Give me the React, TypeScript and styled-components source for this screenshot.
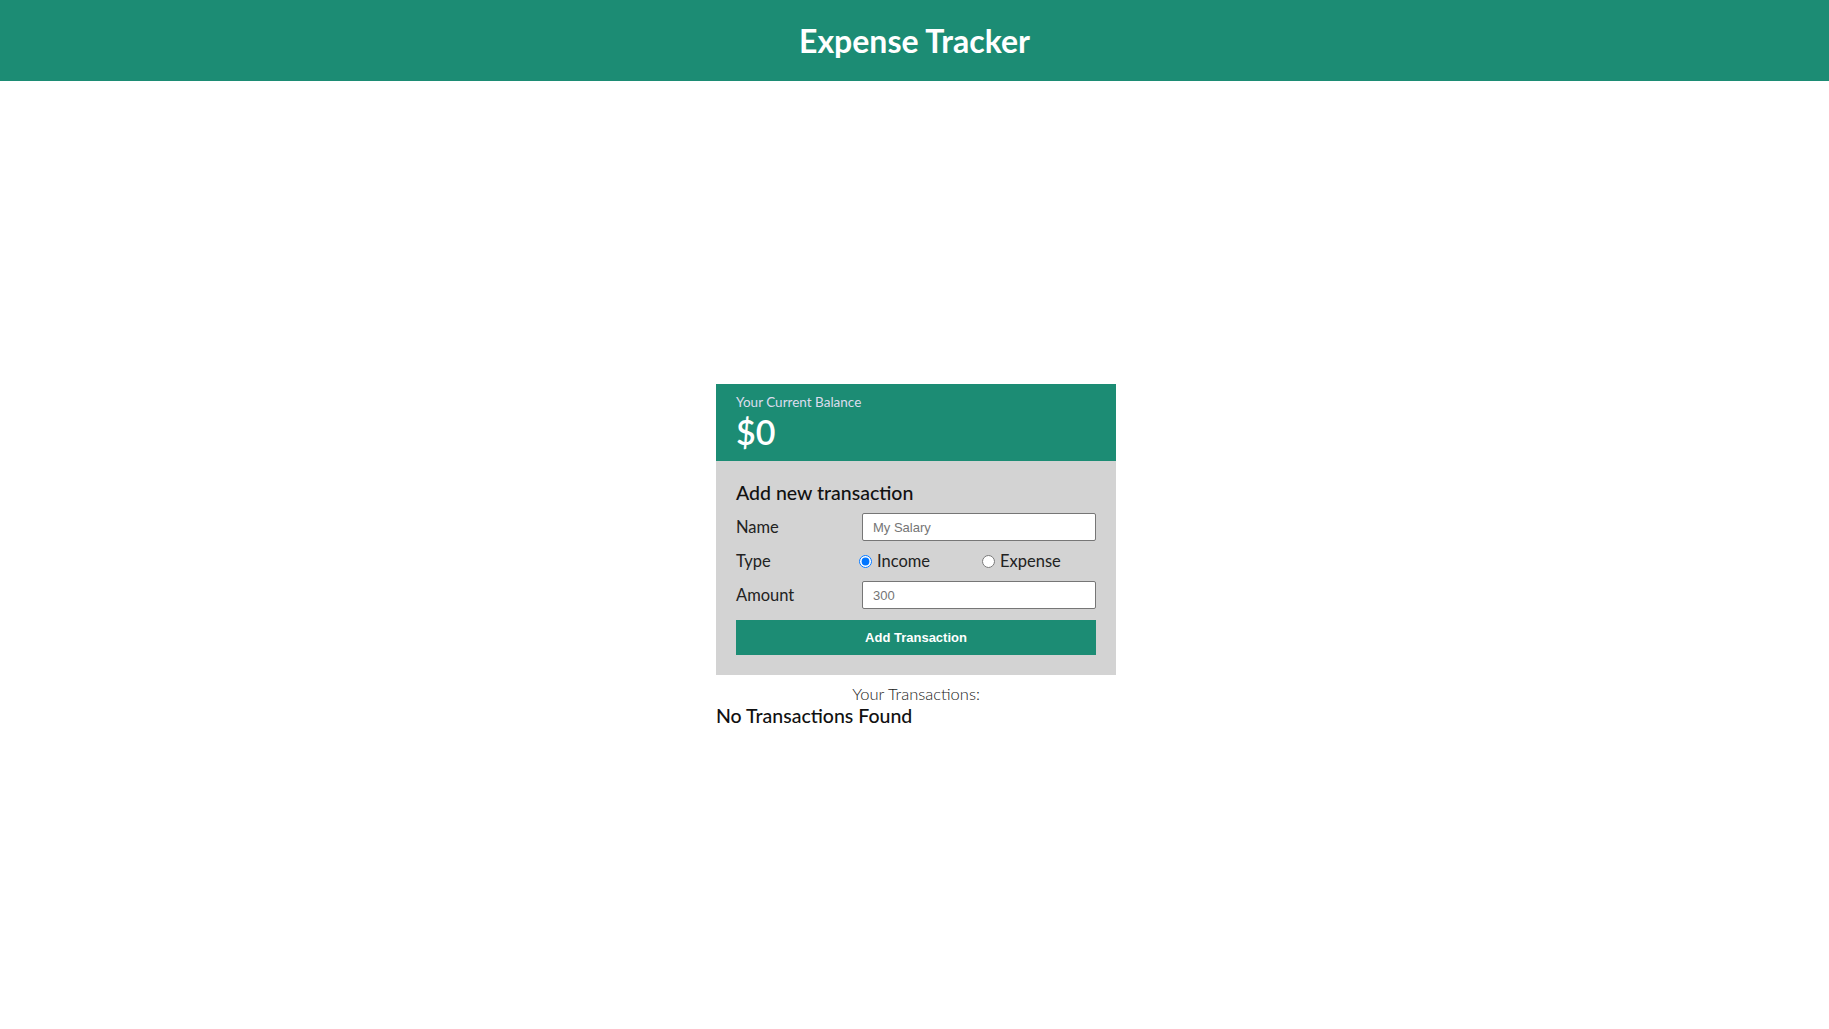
import styled, { createGlobalStyle } from 'styled-components';

const GlobalStyle = createGlobalStyle`
  body {
    margin: 0;
    font-family: "Lato", "Open Sans", sans-serif;
    color: #111;
    background: #fff;
  }
  * {
    box-sizing: border-box;
  }
`;

function App() {
  return (
    <>
      <GlobalStyle />
      <Header>
        <HeaderTitle>Expense Tracker</HeaderTitle>
      </Header>
      <Main>
        <Tracker>
          <BalanceBox>
            <BalanceLabel>Your Current Balance</BalanceLabel>
            <BalanceValue>$0</BalanceValue>
          </BalanceBox>
          <FormBox>
            <FormTitle>Add new transaction</FormTitle>
            <Row>
              <Label>Name</Label>
              <TextInput placeholder="My Salary" />
            </Row>
            <Row>
              <TypeLabel>Type</TypeLabel>
              <RadioOption>
                <input type="radio" name="type" defaultChecked />
                Income
              </RadioOption>
              <RadioOption>
                <input type="radio" name="type" />
                Expense
              </RadioOption>
            </Row>
            <Row>
              <Label>Amount</Label>
              <TextInput placeholder="300" />
            </Row>
            <SubmitButton>Add Transaction</SubmitButton>
          </FormBox>
          <ListTitle>Your Transactions:</ListTitle>
          <EmptyText>No Transactions Found</EmptyText>
        </Tracker>
      </Main>
    </>
  );
}

export default App;

const Header = styled.header`
  height: 81px;
  background: #1c8c74;
  display: flex;
  align-items: center;
  justify-content: center;
`;

const HeaderTitle = styled.h1`
  margin: 0;
  color: #fff;
  font-size: 32px;
  font-weight: 700;
`;

const Main = styled.main`
  display: flex;
  justify-content: center;
  padding: 303px 0 0 3px;
`;

const Tracker = styled.div`
  width: 400px;
  display: flex;
  flex-direction: column;
`;

const BalanceBox = styled.div`
  height: 77px;
  background: #1c8c74;
  padding: 10px 20px 0;
  color: #fff;
`;

const BalanceLabel = styled.div`
  font-size: 13.5px;
  color: #dde;
  line-height: 16px;
`;

const BalanceValue = styled.div`
  font-size: 34px;
  font-weight: 600;
  line-height: 40px;
  margin-top: 2px;
`;

const FormBox = styled.div`
  background: #d3d3d3;
  padding: 20px 20px 20px;
  display: flex;
  flex-direction: column;
`;

const FormTitle = styled.h3`
  margin: 0 0 8px;
  font-size: 19.5px;
  font-weight: 500;
  line-height: 24px;
  color: #111;
`;

const Row = styled.div`
  display: flex;
  align-items: center;
  height: 28px;
  margin-bottom: 6px;
  font-size: 16.5px;
  color: #222;
`;

const Label = styled.label`
  flex: 0 0 126px;
`;

const TypeLabel = styled(Label)`
  flex-basis: 118px;
`;

const RadioOption = styled.label`
  flex: 0 0 123px;
  display: flex;
  align-items: center;
  gap: 2px;

  input {
    margin: 0 3px 0 5px;
    width: 13px;
    height: 13px;
  }
`;

const TextInput = styled.input`
  flex: 1;
  height: 28px;
  border: 1px solid #767676;
  border-radius: 2px;
  padding: 0 10px;
  font-family: "Liberation Sans", Arial, sans-serif;
  font-size: 13px;
  background: #fff;

  &::placeholder {
    color: #757575;
  }
`;

const SubmitButton = styled.button`
  margin-top: 5px;
  height: 35px;
  border: none;
  background: #1c8c74;
  color: #fff;
  font-family: "Liberation Sans", Arial, sans-serif;
  font-size: 13px;
  font-weight: 700;
  cursor: pointer;
`;

const ListTitle = styled.div`
  margin-top: 10px;
  text-align: center;
  font-size: 16.5px;
  font-weight: 300;
  color: #222;
  line-height: 19px;
`;

const EmptyText = styled.h3`
  margin: 0;
  font-size: 19.5px;
  font-weight: 500;
  line-height: 24px;
  color: #111;
`;
